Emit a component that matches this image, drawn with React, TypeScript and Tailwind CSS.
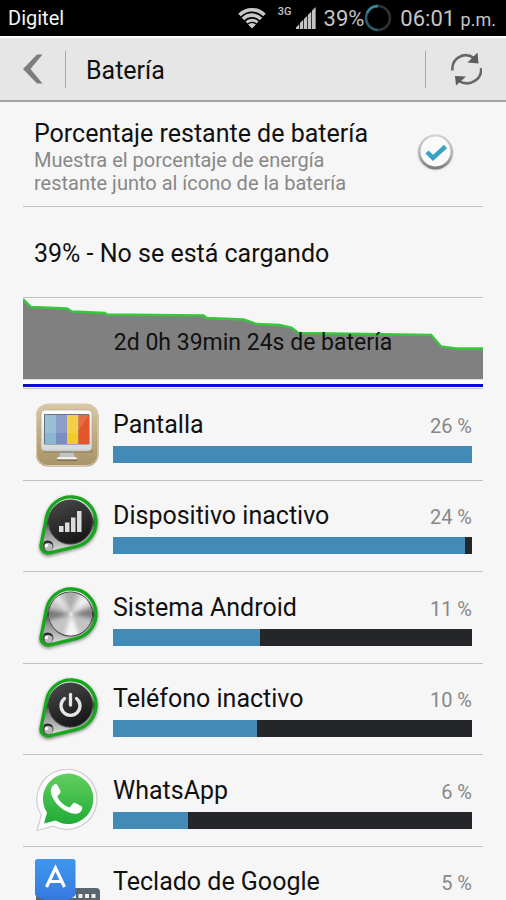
import React from "react";

const apps = [
    { name: "Pantalla", percent: 26, fill: 100, icon: <ScreenIcon /> },
    { name: "Dispositivo inactivo", percent: 24, fill: 98, icon: <KnobIcon kind="signal" /> },
    { name: "Sistema Android", percent: 11, fill: 41, icon: <KnobIcon kind="metal" /> },
    { name: "Teléfono inactivo", percent: 10, fill: 40, icon: <KnobIcon kind="power" /> },
    { name: "WhatsApp", percent: 6, fill: 21, icon: <WhatsAppIcon /> },
    { name: "Teclado de Google", percent: 5, fill: 18, icon: <KeyboardIcon /> },
];

function ScreenIcon() {
    return (
        <svg viewBox="0 0 64 64" className="size-16 shrink-0" aria-hidden="true">
            <defs>
                <linearGradient id="wood" x1="0" y1="0" x2="0" y2="1">
                    <stop offset="0" stopColor="#d8c8a4" />
                    <stop offset="0.6" stopColor="#bda678" />
                    <stop offset="1" stopColor="#a8936c" />
                </linearGradient>
                <linearGradient id="frame" x1="0" y1="0" x2="0" y2="1">
                    <stop offset="0" stopColor="#ffffff" />
                    <stop offset="1" stopColor="#d3d6d8" />
                </linearGradient>
            </defs>
            <rect x="1" y="1" width="62.5" height="62.5" rx="12" fill="#a08e6b" />
            <rect x="1.5" y="1" width="61.5" height="61.5" rx="11.5" fill="url(#wood)" stroke="#d9cdb2" strokeWidth="1" />
            <path d="M8 47h50v3H8z" fill="#8d7a55" opacity="0.5" />
            <path d="M25.500 47h13l1 8H24.500z" fill="#c2c4c4" />
            <path d="M25.500 47h13v3H25.500z" fill="#8f9191" />
            <path d="M23 54h18l1.500 2.500h-21z" fill="#f0f0ee" />
            <path d="M21.500 56.500h21v1.500H21.500z" fill="#837250" />
            <rect x="6" y="7" width="51" height="41" rx="4" fill="url(#frame)" stroke="#b1aa98" strokeWidth="0.7" />
            <rect x="9" y="11" width="45.5" height="30.5" rx="1" fill="#66717c" />
            <path d="M10 12h11V41h-11z" fill="#8ab6d0" />
            <path d="M21 12h11V41h-11z" fill="#7c8dbf" />
            <path d="M32 12h11.500V41H32z" fill="#f3c92c" />
            <path d="M43.500 12h10.500V41H43.500z" fill="#e4552c" />
            <path d="M10 12h44L42 30H10z" fill="#fff" opacity="0.14" />
        </svg>
    );
}

function KnobIcon({ kind }: { kind: "signal" | "metal" | "power" }) {
    return (
        <svg viewBox="0 0 64 64" className="size-16 shrink-0 overflow-visible" aria-hidden="true">
            <defs>
                <linearGradient id={`${kind}-base`} x1="0" y1="0" x2="0" y2="1">
                    <stop offset="0" stopColor="#f5f5f5" />
                    <stop offset="0.3" stopColor="#b5b5b5" />
                    <stop offset="0.45" stopColor="#3c3c3c" />
                    <stop offset="0.6" stopColor="#888" />
                    <stop offset="1" stopColor="#e2e2e2" />
                </linearGradient>
                <linearGradient id={`${kind}-face`} x1="0" y1="0" x2="0.4" y2="1">
                    <stop offset="0" stopColor="#4a4a4a" />
                    <stop offset="1" stopColor="#191919" />
                </linearGradient>
                <filter id={`${kind}-soft`} x="-20%" y="-20%" width="140%" height="140%">
                    <feGaussianBlur stdDeviation="1.5" />
                </filter>
                <filter id={`${kind}-brush`}>
                    <feGaussianBlur stdDeviation="2" />
                </filter>
                <clipPath id={`${kind}-clip`}>
                    <circle cx="35.5" cy="28" r="21.5" />
                </clipPath>
            </defs>
            <path d="M11.500 24.500A25 25 0 1 1 41.800 53.500L14.600 60.500A7 7 0 0 1 6.100 52.500Z" fill="none" stroke="#333" strokeWidth="4" opacity="0.5" filter={`url(#${kind}-soft)`} />
            <path d="M11.500 23.200A25 25 0 1 1 41.800 52.300L14.600 58.800A7 7 0 0 1 6.100 50.700Z" fill={`url(#${kind}-base)`} stroke="#14a81a" strokeWidth="3.3" strokeLinejoin="round" />
            <circle cx="35.500" cy="29" r="22.500" fill="#a4a4a4" />
            <circle cx="35.500" cy="28" r="22" fill={kind === "metal" ? "#c4c4c4" : `url(#${kind}-face)`} stroke="#3a3a3a" strokeWidth="1" />
            {kind === "metal" && (
                <g clipPath={`url(#${kind}-clip)`}>
                    <g filter={`url(#${kind}-brush)`}>
                        <path d="M36 28L8 22V36Z" fill="#777" />
                        <path d="M36 28L64 20V34Z" fill="#7c7c7c" />
                        <path d="M36 28L27 0H44Z" fill="#acacac" />
                        <path d="M36 28L27 58H48Z" fill="#f7f7f7" />
                        <path d="M36 28L50 2L62 12Z" fill="#eee" />
                        <path d="M36 28L10 8L20 2Z" fill="#e6e6e6" />
                    </g>
                    <circle cx="36" cy="28" r="2" fill="#fff" opacity="0.5" />
                </g>
            )}
            {kind === "signal" && (
                <path d="M24 32h4.500v6h-4.500zM30 28.500h4.500v9.500h-4.500zM36 23.500h4.500V38h-4.500zM42 17h4.500v21h-4.500z" fill="#dcdcdc" />
            )}
            {kind === "power" && (
                <g fill="none" stroke="#e6e6e6" strokeWidth="3.3" strokeLinecap="round">
                    <path d="M29.500 21.500A9.500 9.500 0 1 0 41.500 21.500" />
                    <path d="M35.500 17.500V28" />
                </g>
            )}
            <circle cx="13" cy="52" r="5.500" fill="#4d4d4d" />
            <circle cx="13.500" cy="53" r="4" fill="#b9b9b9" />
            <circle cx="11.500" cy="51.500" r="1.800" fill="#fff" />
            <path d="M9 48.500q4-2.500 8 1" fill="none" stroke="#222" strokeWidth="1.500" />
        </svg>
    );
}

function WhatsAppIcon() {
    return (
        <svg viewBox="0 0 64 64" className="size-16 shrink-0" aria-hidden="true">
            <defs>
                <linearGradient id="chat" x1="0" y1="0" x2="0" y2="1">
                    <stop offset="0" stopColor="#62cf60" />
                    <stop offset="1" stopColor="#21ab36" />
                </linearGradient>
            </defs>
            <path d="M2 61.500L6.300 46A30 30 0 1 1 18.500 57.200Z" fill="#fcfcfc" stroke="#d3cbd5" strokeWidth="1.200" strokeLinejoin="round" />
            <path d="M9 54.500L12 43.500A25.200 25.200 0 1 1 20.500 51.600Z" fill="url(#chat)" />
            <path transform="translate(-2 -1)" d="M24.500 17.200c-1-1.700-2.800-1.400-4.200.1-2.300 2.400-3.100 5.500-1.900 9.100 3 8.600 9.600 14.800 18.300 18.300 5 2 9.300 1.200 11.500-1.800 1.100-1.500 1.400-3.400.7-4.100-1.300-1.300-5.100-3-6.800-3.700-1.200-.5-1.800-.2-2.600.8l-2 2.500c-.8 1-1.600 1-2.700.5-4.300-2-7.600-5-9.900-9.200-.6-1-.4-1.700.3-2.500l1.900-2.300c.6-.8.6-1.500.2-2.500z" fill="#fff" />
        </svg>
    );
}

function KeyboardIcon() {
    return (
        <svg viewBox="0 0 64 64" className="size-16 shrink-0 overflow-visible" aria-hidden="true">
            <defs>
                <linearGradient id="key" x1="0" y1="0" x2="0" y2="1">
                    <stop offset="0" stopColor="#3f97ee" />
                    <stop offset="1" stopColor="#3578df" />
                </linearGradient>
            </defs>
            <rect x="1" y="28" width="64" height="34" rx="4" fill="#596670" />
            <path d="M37 34h4v4h-4zM43.500 34h4v4h-4zM50 34h4v4h-4zM56.500 34h4v4h-4zM37 41h4v4h-4zM43.500 41h4v4h-4zM50 41h4v4h-4zM56.500 41h4v4h-4z" fill="#eceff1" />
            <path d="M0 34H41L31 42H12Z" fill="#2456ad" />
            <path d="M3-1H38a2.500 2.500 0 0 1 2.500 2.500V34q0 2-2 3L31 41H12L2 36.500Q0 35.500 0 34V1.500A2.500 2.500 0 0 1 3-1Z" fill="url(#key)" />
            <path d="M11.500 27L20.500 8L29.500 27M15 21.500H26" fill="none" stroke="#fff" strokeWidth="3.200" />
        </svg>
    );
}

function StatusBar() {
    return (
        <div className="flex h-9 shrink-0 items-center bg-black pr-[10px] pl-2 text-[#c4c4c4]">
            <span className="flex-1 text-xl text-gray-100">Digitel</span>
            <svg viewBox="0 0 28 22" className="h-[22px] w-7" fill="none" stroke="#c8c8c8" strokeWidth="3.700" aria-label="Wi-Fi">
                <path d="M1.500 8A17.500 17.500 0 0 1 26.500 8" />
                <path d="M5 12A12.500 12.500 0 0 1 23 12" />
                <path d="M8.500 15.500A8 8 0 0 1 19.500 15.500" strokeWidth="3" />
                <path d="M10 17.500Q14 14.500 18 17.500L14 21.500Z" fill="#c8c8c8" stroke="none" />
            </svg>
            <span className="mb-3 ml-3 text-[11px] leading-4 font-medium">3G</span>
            <svg viewBox="0 0 22 24" className="ml-1 h-6 w-5" fill="#c4c4c4" aria-label="Señal">
                <path d="M0 24V22.500L3.600 19V24zM4.400 24V17.500L8 14V24zM8.800 24V13L12.400 9.500V24zM13.200 24V8.500L16.800 5V24zM17.600 24V4L21.600 0V24z" />
            </svg>
            <span className="ml-2 text-[22px]">39%</span>
            <svg viewBox="0 0 28 28" className="size-7" fill="none" aria-label="Batería">
                <circle cx="14" cy="14" r="12" stroke="#303438" strokeWidth="2.500" />
                <path d="M14 2A12 12 0 0 0 14 26" stroke="#245c6e" strokeWidth="2.500" />
                <path d="M14 2A12 12 0 0 0 3 9" stroke="#35859b" strokeWidth="2.500" />
            </svg>
            <span className="ml-2 text-[22px]">06:01 <span className="text-lg">p.m.</span></span>
        </div>
    );
}

function Header() {
    return (
        <header className="flex h-[66px] shrink-0 items-center border-t-2 border-b-2 border-t-white border-b-[#a3a3a3] bg-[#e6e6e6]">
            <button type="button" aria-label="Atrás" className="flex w-[65px] justify-center">
                <svg viewBox="0 0 20 30" className="h-[30px] w-5" fill="#7d7d7d">
                    <path d="M0 15L14 0.500H19.500L7.500 15L19.500 29.500H14Z" />
                </svg>
            </button>
            <div className="h-[37px] w-px bg-[#a8a8a8]" />
            <h1 className="ml-5 flex-1 pt-1 text-[25px] text-[#111]">Batería</h1>
            <div className="h-[37px] w-px bg-[#a8a8a8]" />
            <button type="button" aria-label="Actualizar" className="flex w-20 justify-center">
                <svg viewBox="0 0 32 34" className="h-[34px] w-8" fill="none" stroke="#666" strokeWidth="2.500">
                    <path d="M2.500 18.500C1 6.500 14-1 24 6" />
                    <path d="M31 16C32.500 28 18 35.500 8.500 28.500" />
                    <path d="M27.500 0.500L28.500 11.500L17.500 10.500Z" fill="#5c5c5c" stroke="none" />
                    <path d="M6 33.500L5 24L16 24.500Z" fill="#5c5c5c" stroke="none" />
                </svg>
            </button>
        </header>
    );
}

function HistoryChart() {
    return (
        <div className="relative h-[91px] border-b border-[#c2c2c2]">
            <svg viewBox="0 0 461 90" preserveAspectRatio="none" className="h-full w-full" aria-hidden="true">
                <path d="M0 1L8 9L44 10.500L49 13.500L82 15L84 16.500L181 17.500L184 20L221 21.500L234 26L257 27L269 29.500L276 35L409 37L419 48.500L434 50.500L461 50.500V81.500H0Z" fill="#808080" />
                <path d="M0 81.500H461V86H0Z" fill="#fff" />
                <path d="M0 1L8 9L44 10.500L49 13.500L82 15L84 16.500L181 17.500L184 20L221 21.500L234 26L257 27L269 29.500L276 35L409 37L419 48.500L434 50.500L461 50.500" fill="none" stroke="#35c83a" strokeWidth="2.300" />
                <path d="M0 86H461V89H0Z" fill="#0a0ad2" />
            </svg>
            <p className="absolute inset-0 flex items-center justify-center text-[23px] text-[#111]">2d 0h 39min 24s de batería</p>
        </div>
    );
}

export default function App() {
    return (
        <div className="flex h-screen flex-col overflow-hidden bg-[#f6f6f6] font-['Roboto',sans-serif] text-[#111]">
            <StatusBar />
            <Header />
            <main className="min-h-0 flex-1 overflow-hidden px-[23px]">
                <label className="flex h-[105px] items-center justify-between border-b border-[#c2c2c2] pr-7 pl-[11px]">
                    <span className="pt-1">
                        <span className="block text-[25px] leading-[31px]">Porcentaje restante de batería</span>
                        <span className="block text-xl leading-[23px] text-[#888]">
                            Muestra el porcentaje de energía
                            <br />
                            restante junto al ícono de la batería
                        </span>
                    </span>
                    <span className="relative size-10">
                        <input type="checkbox" defaultChecked className="peer block size-10 appearance-none rounded-full" />
                        <svg viewBox="0 2 40 40" className="pointer-events-none absolute inset-0 opacity-60 peer-checked:opacity-100" aria-hidden="true">
                            <defs>
                                <linearGradient id="ring" x1="0" y1="0" x2="0" y2="1">
                                    <stop offset="0" stopColor="#d2d2d2" />
                                    <stop offset="0.6" stopColor="#b0b0b0" />
                                    <stop offset="1" stopColor="#777" />
                                </linearGradient>
                            </defs>
                            <circle cx="20.5" cy="21" r="18.500" fill="#000" opacity="0.06" />
                            <circle cx="20.5" cy="20" r="17.500" fill="url(#ring)" />
                            <circle cx="20.5" cy="19.500" r="15" fill="#fafafa" />
                            <path d="M12 20L18 26L30.500 14.500" fill="none" stroke="#36a3c4" strokeWidth="4.500" />
                        </svg>
                    </span>
                </label>
                <p className="flex h-[91px] items-center border-b border-[#c2c2c2] pt-1 pl-[11px] text-[25px]">39% - No se está cargando</p>
                <HistoryChart />
                <ul>
                    {apps.map((app) => (
                        <li key={app.name} className="flex h-[91px] items-center gap-[14px] border-b border-[#c2c2c2] pr-[11px] pl-3 odd:h-[92px]">
                            {app.icon}
                            <div className="flex-1">
                                <div className="flex items-baseline justify-between">
                                    <span className="text-[25px] leading-9">{app.name}</span>
                                    <span className="text-xl text-[#888]">{app.percent} %</span>
                                </div>
                                <div className="mt-[3px] h-[17px] bg-[#25262a]">
                                    <div className="h-full bg-[#428bb7]" style={{ width: `${app.fill}%` }} />
                                </div>
                            </div>
                        </li>
                    ))}
                </ul>
            </main>
        </div>
    );
}
